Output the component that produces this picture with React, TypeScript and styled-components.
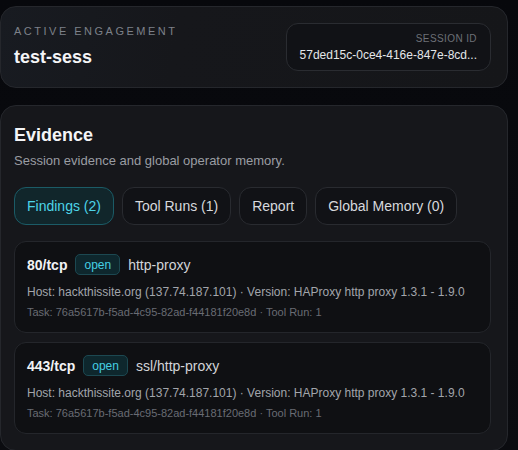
import React from 'react';
import styled, { createGlobalStyle } from 'styled-components';

const GlobalStyle = createGlobalStyle`
  html, body {
    margin: 0;
    padding: 0;
    background: #08090d;
    font-family: 'Liberation Sans', Arial, sans-serif;
  }
  * { box-sizing: border-box; }
`;

const Page = styled.div`
  display: flex;
  flex-direction: column;
  gap: 17px;
  padding: 6px 10px 0 0;
  min-height: 100vh;
  background: linear-gradient(180deg, #07080c 0%, #0b0c10 100%);
`;

const Card = styled.section`
  background: linear-gradient(100deg, #181b21 0%, #16171b 35%, #151619 100%);
  border: 1px solid #25272c;
  border-radius: 16px;
`;

const HeaderCard = styled(Card)`
  height: 82px;
  display: flex;
  align-items: center;
  justify-content: space-between;
  padding: 0 16px 0 13px;
`;

const HeaderLeft = styled.div`
  display: flex;
  flex-direction: column;
  gap: 8px;
  margin-top: -2px;
`;

const Eyebrow = styled.div`
  font-size: 11px;
  letter-spacing: 2.5px;
  color: #7d8189;
  text-transform: uppercase;
  line-height: 14px;
`;

const Title = styled.h1`
  margin: 0;
  font-size: 18px;
  font-weight: 700;
  color: #f4f5f7;
  line-height: 22px;
`;

const SessionBox = styled.div`
  width: 205px;
  height: 48px;
  border: 1px solid #2a2c31;
  border-radius: 12px;
  background: #111216;
  padding: 0 13px;
  display: flex;
  flex-direction: column;
  justify-content: center;
  align-items: flex-end;
  gap: 3px;
`;

const SessionLabel = styled.div`
  font-size: 10px;
  letter-spacing: 0.4px;
  color: #6d7077;
  line-height: 13px;
`;

const SessionValue = styled.div`
  font-size: 12px;
  color: #e4e6e9;
  line-height: 15px;
  white-space: nowrap;
`;

const EvidenceCard = styled(Card)`
  padding: 18px 16px 16px 13px;
  background: #16171b;
`;

const SectionTitle = styled.h2`
  margin: 0;
  font-size: 18px;
  font-weight: 700;
  color: #f4f5f7;
  line-height: 22px;
`;

const Subtitle = styled.p`
  margin: 7px 0 0;
  font-size: 13px;
  color: #9a9da3;
  line-height: 16px;
`;

const Tabs = styled.div`
  display: flex;
  gap: 8px;
  margin-top: 18px;
`;

const Tab = styled.button<{ $active?: boolean }>`
  height: 38px;
  padding: 0 12px;
  border-radius: 12px;
  font-family: inherit;
  font-size: 14px;
  cursor: pointer;
  border: 1px solid ${(p) => (p.$active ? '#1b5b66' : '#292b30')};
  background: ${(p) => (p.$active ? '#11262b' : '#111216')};
  color: ${(p) => (p.$active ? '#4dd4e8' : '#d7d9dd')};
`;

const FindingList = styled.div`
  display: flex;
  flex-direction: column;
  gap: 9px;
  margin-top: 16px;
`;

const Finding = styled.div`
  background: #0f1013;
  border: 1px solid #24262b;
  border-radius: 12px;
  padding: 12px 12px 13px;
`;

const FindingHead = styled.div`
  display: flex;
  align-items: center;
  gap: 8px;
  height: 21px;
`;

const Port = styled.span`
  font-size: 14px;
  font-weight: 700;
  color: #f2f3f5;
`;

const Badge = styled.span`
  height: 21px;
  display: inline-flex;
  align-items: center;
  padding: 0 8px;
  font-size: 12px;
  color: #45cfe3;
  background: #0e272d;
  border: 1px solid #1c4851;
  border-radius: 5px;
`;

const Service = styled.span`
  font-size: 14px;
  color: #d2d4d8;
`;

const Meta = styled.div`
  margin-top: 9px;
  font-size: 12px;
  line-height: 16px;
  color: #a2a5ab;
  white-space: nowrap;
`;

const Sub = styled.div`
  margin-top: 5px;
  font-size: 11px;
  line-height: 14px;
  color: #696c73;
  white-space: nowrap;
`;

const findings = [
  { port: '80/tcp', service: 'http-proxy' },
  { port: '443/tcp', service: 'ssl/http-proxy' },
];

export default function App() {
  return (
    <>
      <GlobalStyle />
      <Page>
        <HeaderCard>
          <HeaderLeft>
            <Eyebrow>Active Engagement</Eyebrow>
            <Title>test-sess</Title>
          </HeaderLeft>
          <SessionBox>
            <SessionLabel>SESSION ID</SessionLabel>
            <SessionValue>57ded15c-0ce4-416e-847e-8cd...</SessionValue>
          </SessionBox>
        </HeaderCard>

        <EvidenceCard>
          <SectionTitle>Evidence</SectionTitle>
          <Subtitle>Session evidence and global operator memory.</Subtitle>
          <Tabs>
            <Tab $active>Findings (2)</Tab>
            <Tab>Tool Runs (1)</Tab>
            <Tab>Report</Tab>
            <Tab>Global Memory (0)</Tab>
          </Tabs>
          <FindingList>
            {findings.map((f) => (
              <Finding key={f.port}>
                <FindingHead>
                  <Port>{f.port}</Port>
                  <Badge>open</Badge>
                  <Service>{f.service}</Service>
                </FindingHead>
                <Meta>
                  Host: hackthissite.org (137.74.187.101) · Version: HAProxy http proxy 1.3.1 - 1.9.0
                </Meta>
                <Sub>Task: 76a5617b-f5ad-4c95-82ad-f44181f20e8d · Tool Run: 1</Sub>
              </Finding>
            ))}
          </FindingList>
        </EvidenceCard>
      </Page>
    </>
  );
}
